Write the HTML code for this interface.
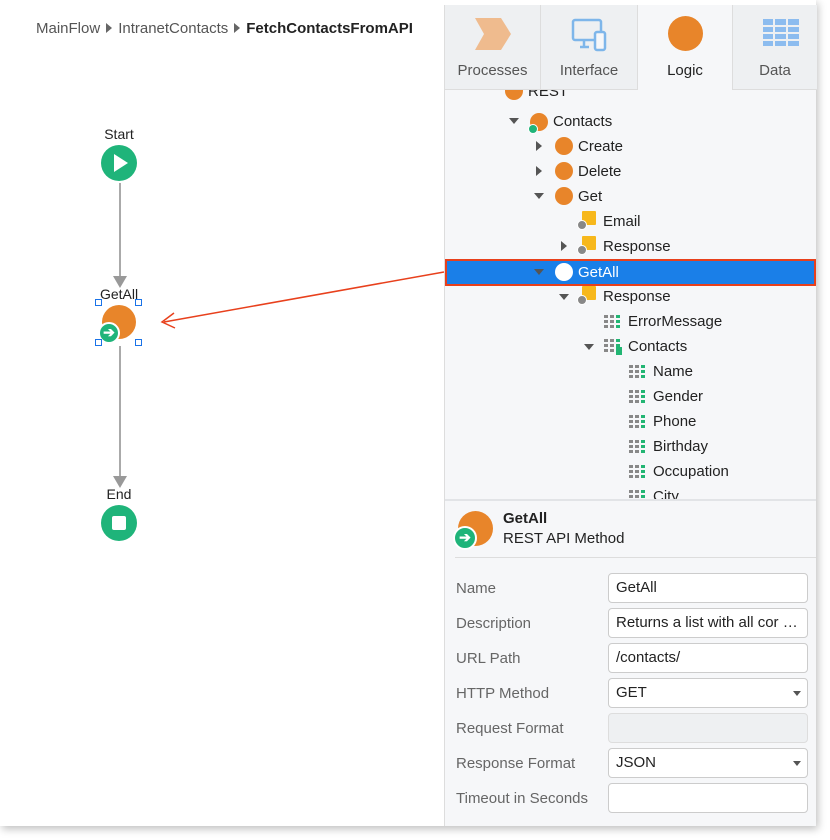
<!DOCTYPE html>
<html><head><meta charset="utf-8"><style>
*{box-sizing:border-box;margin:0;padding:0}
body{width:830px;height:840px;background:#fff;font-family:"Liberation Sans",sans-serif;position:relative;overflow:hidden;color:#333}
.frame{position:absolute;left:0;top:0;width:816px;height:826px;background:#fff;box-shadow:2px 3px 8px rgba(0,0,0,.25)}
.bc{position:absolute;left:36px;top:20px;font-size:15px;color:#555}
.bc b{color:#222}
.bc .tri{display:inline-block;width:0;height:0;border-left:6px solid #666;border-top:5px solid transparent;border-bottom:5px solid transparent;margin:0 6px 0 6px}
.lbl{position:absolute;font-size:14px;color:#222;transform:translateX(-50%)}
.vl{position:absolute;left:119px;width:2px;background:#aaa}
.ah{position:absolute;left:113px;width:0;height:0;border-left:7px solid transparent;border-right:7px solid transparent;border-top:12px solid #999}
.right{position:absolute;left:444px;top:5px;width:372px;height:821px;background:#f6f7f9;border-left:1px solid #ddd}
.tab{position:absolute;top:0;height:85px;background:#eef0f2;border-right:1px solid #ddd;border-bottom:1px solid #ddd;text-align:center;font-size:15px;color:#555}
.tab span{position:absolute;left:0;right:0;top:56px}
.row{position:absolute;height:25px;font-size:15px;color:#222;line-height:25px;white-space:nowrap}
.arr{position:absolute;width:0;height:0}
.ad{border-left:5px solid transparent;border-right:5px solid transparent;border-top:6px solid #555}
.ar{border-top:5px solid transparent;border-bottom:5px solid transparent;border-left:6px solid #555}
.oc{position:absolute;width:18px;height:18px;border-radius:50%;background:#e8852a}
.sq{position:absolute;width:14px;height:14px;background:#f7b81c;border-radius:1px}
.sm{position:absolute;width:10px;height:10px;border-radius:50%;background:#888;border:1px solid #fff}
.fl{position:absolute;left:11px;font-size:15px;color:#666}
.in{position:absolute;left:163px;width:200px;height:30px;background:#fff;border:1px solid #ccc;border-radius:4px;font-size:15px;color:#222;padding:5px 7px;white-space:nowrap;overflow:hidden}
.dd::after{content:"";position:absolute;right:6px;top:12px;border-left:4px solid transparent;border-right:4px solid transparent;border-top:5px solid #555}
.h{position:absolute;width:7px;height:7px;border:1px solid #1a73e8;background:#fff}
</style></head><body>
<svg width="0" height="0" style="position:absolute"><defs>
<g id="g"><rect x="0" y="0" width="4" height="3" fill="#888"/><rect x="6" y="0" width="4" height="3" fill="#888"/><rect x="12" y="0" width="4" height="3" fill="#22b573"/><rect x="0" y="5" width="4" height="3" fill="#888"/><rect x="6" y="5" width="4" height="3" fill="#888"/><rect x="12" y="5" width="4" height="3" fill="#22b573"/><rect x="0" y="10" width="4" height="3" fill="#888"/><rect x="6" y="10" width="4" height="3" fill="#888"/><rect x="12" y="10" width="4" height="3" fill="#22b573"/></g>
</defs></svg>
<div class="frame"></div>
<div class="bc">MainFlow<span class="tri"></span>IntranetContacts<span class="tri"></span><b>FetchContactsFromAPI</b></div>

<div class="lbl" style="left:119px;top:126px">Start</div>
<div style="position:absolute;left:101px;top:145px;width:36px;height:36px;border-radius:50%;background:#1fb47a"></div>
<div style="position:absolute;left:114px;top:154px;width:0;height:0;border-left:14px solid #fff;border-top:9px solid transparent;border-bottom:9px solid transparent"></div>
<div class="vl" style="top:183px;height:93px"></div>
<div class="ah" style="top:276px"></div>
<div class="lbl" style="left:119px;top:286px">GetAll</div>
<div style="position:absolute;left:102px;top:305px;width:34px;height:34px;border-radius:50%;background:#e8852a"></div>
<div style="position:absolute;left:98px;top:322px;width:22px;height:22px;border-radius:50%;background:#1fb47a;border:2px solid #fff;color:#fff;font-size:14px;font-weight:bold;line-height:17px;text-align:center">➔</div>
<div class="h" style="left:95px;top:299px"></div>
<div class="h" style="left:135px;top:299px"></div>
<div class="h" style="left:95px;top:339px"></div>
<div class="h" style="left:135px;top:339px"></div>
<div class="vl" style="top:346px;height:130px"></div>
<div class="ah" style="top:476px"></div>
<div class="lbl" style="left:119px;top:486px">End</div>
<div style="position:absolute;left:101px;top:505px;width:36px;height:36px;border-radius:50%;background:#1fb47a"></div>
<div style="position:absolute;left:112px;top:516px;width:14px;height:14px;background:#fff;border-radius:2px"></div>

<svg style="position:absolute;left:0;top:0" width="830" height="840"><line x1="444" y1="272" x2="164" y2="322" stroke="#e8401c" stroke-width="1.5"/><polyline points="174,313 162,322 175,328" fill="none" stroke="#e8401c" stroke-width="1.5"/></svg>

<div class="right">
 <div class="tab" style="left:0;width:96px"><svg style="position:absolute;left:30px;top:13px" width="36" height="32"><polygon points="0,0 26,0 36,16 26,32 0,32 9,16" fill="#efbb8e"/></svg><span style="top:57px">Processes</span></div>
 <div class="tab" style="left:96px;width:97px"><svg style="position:absolute;left:30px;top:13px" width="36" height="34" fill="none" stroke="#7eb6ea" stroke-width="2.5"><rect x="2" y="2" width="28" height="20" rx="2"/><line x1="9" y1="29" x2="18" y2="29"/><line x1="13" y1="22" x2="13" y2="29"/><rect x="24" y="14" width="10" height="18" rx="2" fill="#f6f7f9"/></svg><span style="top:57px">Interface</span></div>
 <div class="tab" style="left:193px;width:95px;background:#f6f7f9;border-bottom:none;color:#222"><div style="position:absolute;left:30px;top:11px;width:35px;height:35px;border-radius:50%;background:#e8852a"></div><span style="top:57px">Logic</span></div>
 <div class="tab" style="left:288px;width:84px;border-right:none"><svg style="position:absolute;left:30px;top:14px" width="36" height="28"><g fill="#8cbcef"><rect x="0" y="0" width="10" height="6"/><rect x="12" y="0" width="11" height="6"/><rect x="25" y="0" width="11" height="6"/><rect x="0" y="8" width="10" height="5"/><rect x="12" y="8" width="11" height="5"/><rect x="25" y="8" width="11" height="5"/><rect x="0" y="15" width="10" height="5"/><rect x="12" y="15" width="11" height="5"/><rect x="25" y="15" width="11" height="5"/><rect x="0" y="22" width="10" height="5"/><rect x="12" y="22" width="11" height="5"/><rect x="25" y="22" width="11" height="5"/></g></svg><span style="top:57px">Data</span></div>

 <div style="position:absolute;left:0;top:85px;width:371px;height:409px;overflow:hidden">
 <div style="position:absolute;left:0;top:6px;width:371px;height:420px">
  <div class="oc" style="left:60px;top:-14px"></div><div class="row" style="left:83px;top:-17px">REST</div>
  <div class="arr ad" style="left:64px;top:22px"></div><div class="oc" style="left:85px;top:17px"></div><div style="position:absolute;left:83px;top:28px;width:10px;height:10px;border-radius:50%;background:#1fb47a;border:1px solid #fff"></div><div class="row" style="left:108px;top:13px">Contacts</div>
  <div class="arr ar" style="left:91px;top:45px"></div><div class="oc" style="left:110px;top:41px"></div><div class="row" style="left:133px;top:38px">Create</div>
  <div class="arr ar" style="left:91px;top:70px"></div><div class="oc" style="left:110px;top:66px"></div><div class="row" style="left:133px;top:63px">Delete</div>
  <div class="arr ad" style="left:89px;top:97px"></div><div class="oc" style="left:110px;top:91px"></div><div class="row" style="left:133px;top:88px">Get</div>
  <div class="sq" style="left:137px;top:115px"></div><div class="sm" style="left:132px;top:124px"></div><div class="row" style="left:158px;top:113px">Email</div>
  <div class="arr ar" style="left:116px;top:145px"></div><div class="sq" style="left:137px;top:140px"></div><div class="sm" style="left:132px;top:149px"></div><div class="row" style="left:158px;top:138px">Response</div>
  <div style="position:absolute;left:0;top:163px;width:371px;height:27px;background:#1a7fe8;border:2px solid #e8401c"></div>
  <div class="arr ad" style="left:89px;top:173px"></div><div class="oc" style="left:110px;top:167px;background:#fff"></div><div class="row" style="left:133px;top:164px;color:#fff">GetAll</div>
  <div class="arr ad" style="left:114px;top:198px"></div><div class="sq" style="left:137px;top:190px"></div><div class="sm" style="left:132px;top:199px"></div><div class="row" style="left:158px;top:188px">Response</div>
  <svg style="position:absolute;left:159px;top:219px" width="16" height="13"><use href="#g"/></svg><div class="row" style="left:183px;top:213px">ErrorMessage</div>
  <div class="arr ad" style="left:139px;top:248px"></div><svg style="position:absolute;left:159px;top:243px" width="18" height="16"><use href="#g"/><rect x="12" y="8" width="6" height="8" fill="#22b573"/></svg><div class="row" style="left:183px;top:238px">Contacts</div>
  <svg style="position:absolute;left:184px;top:269px" width="16" height="13"><use href="#g"/></svg><div class="row" style="left:208px;top:263px">Name</div>
  <svg style="position:absolute;left:184px;top:294px" width="16" height="13"><use href="#g"/></svg><div class="row" style="left:208px;top:288px">Gender</div>
  <svg style="position:absolute;left:184px;top:319px" width="16" height="13"><use href="#g"/></svg><div class="row" style="left:208px;top:313px">Phone</div>
  <svg style="position:absolute;left:184px;top:344px" width="16" height="13"><use href="#g"/></svg><div class="row" style="left:208px;top:338px">Birthday</div>
  <svg style="position:absolute;left:184px;top:369px" width="16" height="13"><use href="#g"/></svg><div class="row" style="left:208px;top:363px">Occupation</div>
  <svg style="position:absolute;left:184px;top:394px" width="16" height="13"><use href="#g"/></svg><div class="row" style="left:208px;top:388px">City</div>
 </div>
 </div>
 <div style="position:absolute;left:0;top:494px;width:371px;height:2px;background:#e2e4e7"></div>
 <div style="position:absolute;left:13px;top:506px;width:35px;height:35px;border-radius:50%;background:#e8852a"></div>
 <div style="position:absolute;left:8px;top:521px;width:24px;height:24px;border-radius:50%;background:#1fb47a;border:2px solid #fff;color:#fff;font-size:14px;font-weight:bold;line-height:19px;text-align:center">➔</div>
 <div style="position:absolute;left:58px;top:505px;font-size:15px;font-weight:bold;color:#222">GetAll</div>
 <div style="position:absolute;left:58px;top:525px;font-size:15px;color:#222">REST API Method</div>
 <div style="position:absolute;left:10px;top:552px;width:361px;height:1px;background:#ddd"></div>
 <div class="fl" style="top:575px">Name</div><div class="in" style="top:568px">GetAll</div>
 <div class="fl" style="top:610px">Description</div><div class="in" style="top:603px">Returns a list with all cor …</div>
 <div class="fl" style="top:645px">URL Path</div><div class="in" style="top:638px">/contacts/</div>
 <div class="fl" style="top:680px">HTTP Method</div><div class="in dd" style="top:673px">GET</div>
 <div class="fl" style="top:715px">Request Format</div><div class="in" style="top:708px;background:#eef0f2;border-color:#ddd"></div>
 <div class="fl" style="top:750px">Response Format</div><div class="in dd" style="top:743px">JSON</div>
 <div class="fl" style="top:785px">Timeout in Seconds</div><div class="in" style="top:778px"></div>
</div>
</body></html>
